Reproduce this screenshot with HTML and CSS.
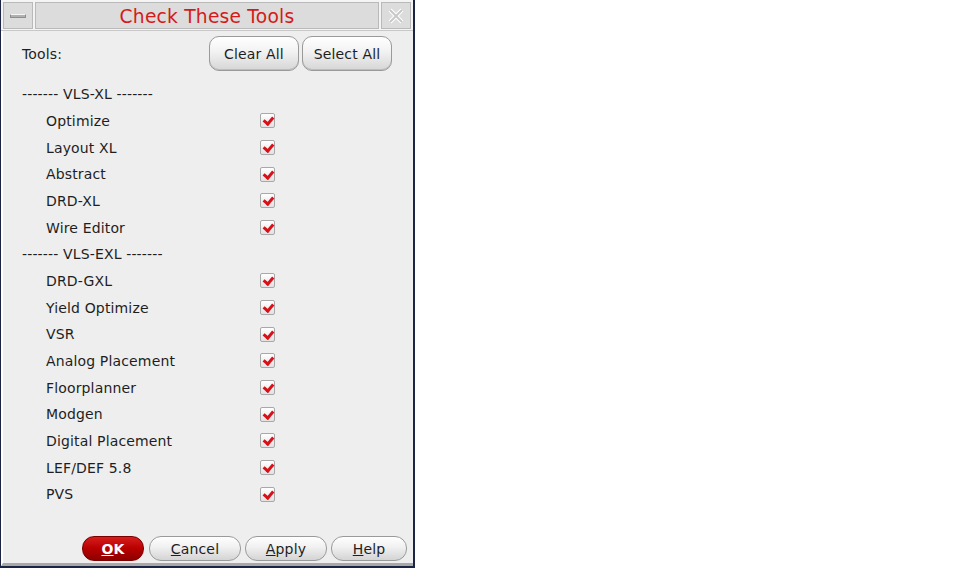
FILE: index.html
```html
<!DOCTYPE html>
<html lang="en">
<head>
    <meta charset="UTF-8">
    <title>Check These Tools</title>
    <link rel="stylesheet" href="styles.css">
</head>
<body>
    <div class="window">
        <div class="titlebar">
            <div class="tb-btn"><span class="min-bar"></span></div>
            <div class="tb-title">Check These Tools</div>
            <div class="tb-btn tb-close">
                <svg width="20" height="20" viewBox="0 0 20 20">
                    <path d="M4 4 L16 16 M16 4 L4 16" stroke="#fff" stroke-width="4"/>
                    <path d="M4 4 L16 16 M16 4 L4 16" stroke="#c8c8c8" stroke-width="2"/>
                </svg>
            </div>
        </div>
        <div class="body">
            <div class="tools-row">
                <span>Tools:</span>
                <div class="tools-buttons">
                    <button class="btn">Clear All</button>
                    <button class="btn">Select All</button>
                </div>
            </div>
            <div class="list">
                <div class="group">------- VLS-XL -------</div>
                <div class="item"><span>Optimize</span><i class="check"></i></div>
                <div class="item"><span>Layout XL</span><i class="check"></i></div>
                <div class="item"><span>Abstract</span><i class="check"></i></div>
                <div class="item"><span>DRD-XL</span><i class="check"></i></div>
                <div class="item"><span>Wire Editor</span><i class="check"></i></div>
                <div class="group">------- VLS-EXL -------</div>
                <div class="item"><span>DRD-GXL</span><i class="check"></i></div>
                <div class="item"><span>Yield Optimize</span><i class="check"></i></div>
                <div class="item"><span>VSR</span><i class="check"></i></div>
                <div class="item"><span>Analog Placement</span><i class="check"></i></div>
                <div class="item"><span>Floorplanner</span><i class="check"></i></div>
                <div class="item"><span>Modgen</span><i class="check"></i></div>
                <div class="item"><span>Digital Placement</span><i class="check"></i></div>
                <div class="item"><span>LEF/DEF 5.8</span><i class="check"></i></div>
                <div class="item"><span>PVS</span><i class="check"></i></div>
            </div>
            <div class="footer">
                <button class="fbtn ok"><u>O</u>K</button>
                <button class="fbtn cancel"><u>C</u>ancel</button>
                <button class="fbtn apply"><u>A</u>pply</button>
                <button class="fbtn help"><u>H</u>elp</button>
            </div>
        </div>
    </div>
</body>
</html>
```

FILE: styles.css
```css
body {
    margin: 0;
    background-color: #ffffff;
    font-family: 'DejaVu Sans', sans-serif;
    font-size: 14px;
    letter-spacing: 0.15px;
    color: #1e1e1e;
}
.window {
    width: 412px;
    height: 566px;
    border-left: 1px solid #1c2445;
    border-right: 2px solid #1c2445;
    border-bottom: 2px solid #1c2445;
    display: flex;
    flex-direction: column;
    background-color: #eeeeee;
}
.titlebar {
    height: 31px;
    display: flex;
    align-items: stretch;
    gap: 2px;
    padding: 2px 2px 0 2px;
    background-color: #f4f4f4;
    box-sizing: border-box;
    border-bottom: 1px solid #c8c8c8;
}
.tb-btn {
    width: 28px;
    background-color: #dcdcdc;
    border: 1px solid #b9b9b9;
    display: flex;
    align-items: center;
    justify-content: center;
    margin-bottom: 1px;
}
.min-bar {
    width: 16px;
    height: 4px;
    background-color: #b0b0b0;
    border: 1px solid #8e8e8e;
    border-top-color: #f6f6f6;
    box-sizing: border-box;
}
.tb-title {
    flex: 1;
    background-color: #dcdcdc;
    border: 1px solid #b9b9b9;
    margin-bottom: 1px;
    color: #d51a1a;
    font-size: 18.7px;
    letter-spacing: 0.2px;
    text-align: center;
    line-height: 28px;
}
.body {
    flex: 1;
    display: flex;
    flex-direction: column;
    border-left: 2px solid #ffffff;
    border-bottom: 3px solid #a8a8a8;
}
.tools-row {
    display: flex;
    align-items: center;
    justify-content: space-between;
    padding: 3px 21px 0 19px;
    height: 39px;
}
.tools-buttons {
    display: flex;
    gap: 3px;
}
.btn {
    font-family: 'DejaVu Sans', sans-serif;
    font-size: 14px;
    letter-spacing: 0.15px;
    color: #1e1e1e;
    height: 35px;
    width: 90px;
    border: 1px solid #9a9a9a;
    border-radius: 10px;
    background: linear-gradient(#ffffff, #f2f2f2 45%, #d6d6d6);
    box-shadow: inset 0 -1px 0 #bdbdbd;
    padding: 0;
}
.list {
    display: flex;
    flex-direction: column;
    padding-top: 8px;
}
.group {
    height: 26.67px;
    line-height: 26.67px;
    padding-left: 19px;
}
.item {
    height: 26.67px;
    display: flex;
    align-items: center;
    padding-left: 43px;
}
.item span {
    width: 214px;
}
.check {
    width: 15px;
    height: 15px;
    box-sizing: border-box;
    border: 1px solid #a8a8a8;
    border-radius: 2px;
    background: linear-gradient(#ffffff, #e2e2e2);
    position: relative;
}
.check::after {
    content: "";
    position: absolute;
    left: 4px;
    top: 1px;
    width: 4px;
    height: 7px;
    border-right: 3px solid #d8101a;
    border-bottom: 3px solid #d8101a;
    transform: rotate(40deg);
}
.footer {
    margin-top: auto;
    display: flex;
    justify-content: flex-end;
    gap: 4px;
    padding: 0 6px 2px 0;
}
.fbtn {
    font-family: 'DejaVu Sans', sans-serif;
    font-size: 14px;
    letter-spacing: 0.15px;
    height: 25px;
    border: 1px solid #9a9a9a;
    border-radius: 12px;
    background: linear-gradient(#ffffff, #f0f0f0 45%, #d4d4d4);
    color: #1e1e1e;
    padding: 0;
}
.ok {
    width: 62px;
    background: linear-gradient(#d81c1c, #b80000 50%, #8e0000);
    border-color: #7a0000;
    color: #ffffff;
    font-weight: bold;
    margin-right: 1px;
}
.cancel {
    width: 92px;
}
.apply {
    width: 82px;
}
.help {
    width: 76px;
}
```
